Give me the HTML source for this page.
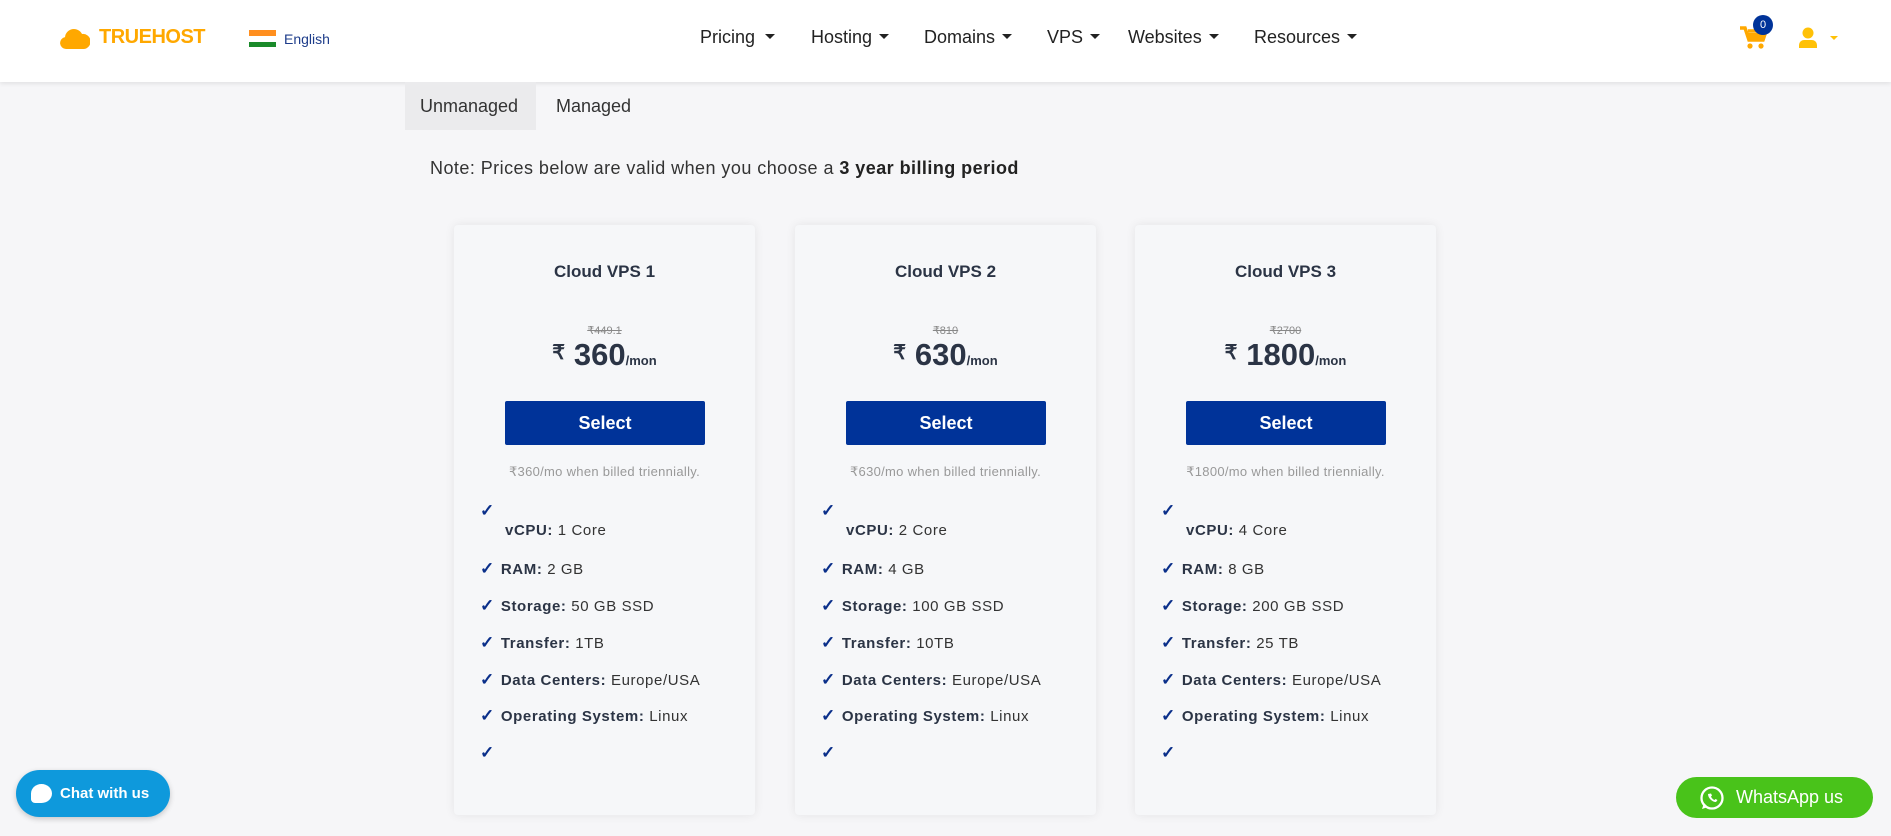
<!DOCTYPE html>
<html><head><meta charset="utf-8"><style>
*{margin:0;padding:0;box-sizing:border-box}
body{width:1891px;height:836px;background:#f6f6f8;font-family:"Liberation Sans",sans-serif;color:#2b3445;position:relative;overflow:hidden}
.hdr{position:absolute;left:0;top:0;width:1891px;height:82px;background:#fff;box-shadow:0 2px 4px rgba(0,0,0,.08)}
.abs{position:absolute}
.nav{font-size:18px;color:#222;top:27px}
.caret{display:inline-block;width:0;height:0;border-left:5px solid transparent;border-right:5px solid transparent;border-top:5px solid #222;vertical-align:middle;margin-left:7px;margin-top:-3px}
.card{position:absolute;top:225px;width:301px;height:590px;background:#f6f7f9;border-radius:4px;box-shadow:0 0 10px rgba(0,0,0,.08)}
.c{position:absolute;width:100%;text-align:center}
.btn{position:absolute;left:51px;top:176px;width:200px;height:44px;background:#003399;color:#fff;font-weight:bold;font-size:18px;text-align:center;line-height:44px;border-radius:2px}
.li{position:absolute;left:26px;font-size:15px;color:#333;letter-spacing:.6px}
.li b{color:#2b3445}
.ck{color:#0a2f8a;font-weight:bold;margin-right:6px;font-size:17px}
</style></head><body>
<div class="hdr">
 <svg class="abs" style="left:60px;top:27px" width="30" height="22" viewBox="0 0 30 22"><path d="M6 22a6 6 0 0 1-1-11.9A9 9 0 0 1 22 7a7.5 7.5 0 0 1 2 15z" fill="#ffa800"/></svg>
 <div class="abs" style="left:99px;top:26px;font-weight:bold;font-size:20px;color:#ffa800;letter-spacing:-.5px">TRUEHOST</div>
 <div class="abs" style="left:249px;top:30px;width:27px;height:6px;background:#ff8f1f"></div>
 <div class="abs" style="left:249px;top:36px;width:27px;height:6px;background:#fff"></div>
 <div class="abs" style="left:249px;top:42px;width:27px;height:5px;background:#1a8a2a"></div>
 <div class="abs" style="left:284px;top:31px;font-size:14px;color:#1d3c8a">English</div>
 <div class="abs nav" style="left:700px">Pricing<span class="caret" style="margin-left:10px"></span></div>
 <div class="abs nav" style="left:811px">Hosting<span class="caret"></span></div>
 <div class="abs nav" style="left:924px">Domains<span class="caret"></span></div>
 <div class="abs nav" style="left:1047px">VPS<span class="caret"></span></div>
 <div class="abs nav" style="left:1128px">Websites<span class="caret"></span></div>
 <div class="abs nav" style="left:1254px">Resources<span class="caret"></span></div>
 <svg class="abs" style="left:1740px;top:26px" width="28" height="24" viewBox="0 0 28 24"><path d="M0 2h5l4 12h14l3-9H8" fill="none" stroke="#ffa800" stroke-width="3.5"/><rect x="8" y="7" width="16" height="7" fill="#ffa800"/><circle cx="10" cy="20" r="2.6" fill="#ffa800"/><circle cx="21" cy="20" r="2.6" fill="#ffa800"/></svg>
 <div class="abs" style="left:1753px;top:15px;width:20px;height:20px;border-radius:50%;background:#003399;color:#fff;font-size:11px;text-align:center;line-height:20px">0</div>
 <svg class="abs" style="left:1798px;top:27px" width="20" height="21" viewBox="0 0 20 21"><circle cx="10" cy="6" r="5.5" fill="#ffc107"/><path d="M1 21v-3a5 5 0 0 1 5-5h8a5 5 0 0 1 5 5v3z" fill="#ffc107"/></svg>
 <div class="abs" style="left:1830px;top:36px;border-left:4px solid transparent;border-right:4px solid transparent;border-top:4px solid #ffc107"></div>
</div>
<div class="abs" style="left:405px;top:82px;width:131px;height:48px;background:#ebebed"></div>
<div class="abs" style="left:420px;top:96px;font-size:18px;color:#333">Unmanaged</div>
<div class="abs" style="left:556px;top:96px;font-size:18px;color:#333">Managed</div>
<div class="abs" style="left:430px;top:158px;font-size:18px;color:#333;letter-spacing:.45px">Note: Prices below are valid when you choose a <b style="color:#222">3 year billing period</b></div>

<div class="card" style="left:454px">
 <div class="c" style="top:37px;font-weight:bold;font-size:17px">Cloud VPS 1</div>
 <div class="c" style="top:99px;font-size:11px;color:#888;text-decoration:line-through">₹449.1</div>
 <div class="c" style="top:112px;font-weight:bold"><span style="font-size:20px;vertical-align:6px">₹</span>&nbsp; <span style="font-size:31px">360</span><span style="font-size:13px">/mon</span></div>
 <div class="btn">Select</div>
 <div class="c" style="top:239px;font-size:13px;color:#999;letter-spacing:.3px">₹360/mo when billed triennially.</div>
 <div class="li" style="top:276px"><span class="ck">✓</span></div>
 <div class="li" style="top:297px;left:51px"><b>vCPU:</b> 1 Core</div>
 <div class="li" style="top:334px"><span class="ck">✓</span><b>RAM:</b> 2 GB</div>
 <div class="li" style="top:371px"><span class="ck">✓</span><b>Storage:</b> 50 GB SSD</div>
 <div class="li" style="top:408px"><span class="ck">✓</span><b>Transfer:</b> 1TB</div>
 <div class="li" style="top:445px"><span class="ck">✓</span><b>Data Centers:</b> Europe/USA</div>
 <div class="li" style="top:481px"><span class="ck">✓</span><b>Operating System:</b> Linux</div>
 <div class="li" style="top:518px"><span class="ck">✓</span></div>
</div>
<div class="card" style="left:795px">
 <div class="c" style="top:37px;font-weight:bold;font-size:17px">Cloud VPS 2</div>
 <div class="c" style="top:99px;font-size:11px;color:#888;text-decoration:line-through">₹810</div>
 <div class="c" style="top:112px;font-weight:bold"><span style="font-size:20px;vertical-align:6px">₹</span>&nbsp; <span style="font-size:31px">630</span><span style="font-size:13px">/mon</span></div>
 <div class="btn">Select</div>
 <div class="c" style="top:239px;font-size:13px;color:#999;letter-spacing:.3px">₹630/mo when billed triennially.</div>
 <div class="li" style="top:276px"><span class="ck">✓</span></div>
 <div class="li" style="top:297px;left:51px"><b>vCPU:</b> 2 Core</div>
 <div class="li" style="top:334px"><span class="ck">✓</span><b>RAM:</b> 4 GB</div>
 <div class="li" style="top:371px"><span class="ck">✓</span><b>Storage:</b> 100 GB SSD</div>
 <div class="li" style="top:408px"><span class="ck">✓</span><b>Transfer:</b> 10TB</div>
 <div class="li" style="top:445px"><span class="ck">✓</span><b>Data Centers:</b> Europe/USA</div>
 <div class="li" style="top:481px"><span class="ck">✓</span><b>Operating System:</b> Linux</div>
 <div class="li" style="top:518px"><span class="ck">✓</span></div>
</div>
<div class="card" style="left:1135px">
 <div class="c" style="top:37px;font-weight:bold;font-size:17px">Cloud VPS 3</div>
 <div class="c" style="top:99px;font-size:11px;color:#888;text-decoration:line-through">₹2700</div>
 <div class="c" style="top:112px;font-weight:bold"><span style="font-size:20px;vertical-align:6px">₹</span>&nbsp; <span style="font-size:31px">1800</span><span style="font-size:13px">/mon</span></div>
 <div class="btn">Select</div>
 <div class="c" style="top:239px;font-size:13px;color:#999;letter-spacing:.3px">₹1800/mo when billed triennially.</div>
 <div class="li" style="top:276px"><span class="ck">✓</span></div>
 <div class="li" style="top:297px;left:51px"><b>vCPU:</b> 4 Core</div>
 <div class="li" style="top:334px"><span class="ck">✓</span><b>RAM:</b> 8 GB</div>
 <div class="li" style="top:371px"><span class="ck">✓</span><b>Storage:</b> 200 GB SSD</div>
 <div class="li" style="top:408px"><span class="ck">✓</span><b>Transfer:</b> 25 TB</div>
 <div class="li" style="top:445px"><span class="ck">✓</span><b>Data Centers:</b> Europe/USA</div>
 <div class="li" style="top:481px"><span class="ck">✓</span><b>Operating System:</b> Linux</div>
 <div class="li" style="top:518px"><span class="ck">✓</span></div>
</div>

<div class="abs" style="left:16px;top:770px;width:154px;height:47px;border-radius:24px;background:#0e99dc;color:#fff;font-weight:bold;font-size:15px;line-height:47px;padding-left:44px;box-shadow:0 2px 6px rgba(0,0,0,.2)">Chat with us</div>
<div class="abs" style="left:31px;top:784px;width:21px;height:19px;border-radius:50% 50% 50% 20%;background:#fff"></div>
<div class="abs" style="left:1676px;top:777px;width:197px;height:41px;border-radius:21px;background:#49c31a;color:#fff;font-size:18px;line-height:41px;padding-left:60px">WhatsApp us</div>
<svg class="abs" style="left:1699px;top:785px" width="26" height="26" viewBox="0 0 26 26"><circle cx="13" cy="13" r="10.5" fill="none" stroke="#fff" stroke-width="2.3"/><path d="M3 24l2-6 4 4z" fill="#fff"/><path d="M9 9c0 4 4 8 8 8l1.5-2-2-1-1 1c-1.5-.5-3-2-3.5-3.5l1-1-1-2z" fill="#fff"/></svg>
</body></html>
